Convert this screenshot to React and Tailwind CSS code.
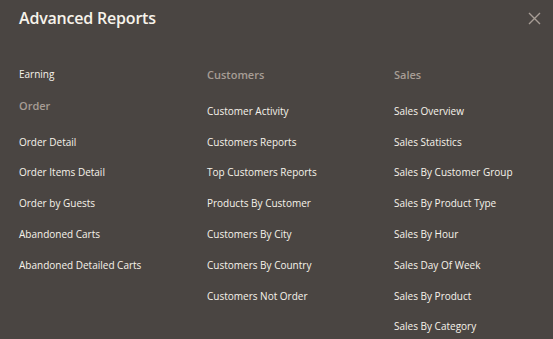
import React from "react";

const Item = ({ children }) => (
  <div className="h-[30.8px] flex items-center text-[10px] text-[#f7f3eb] whitespace-nowrap">{children}</div>
);
const Head = ({ children }) => (
  <div className="h-[31px] mb-[6px] pt-[1px] flex items-center text-[11px] font-semibold text-[#a79d95]">{children}</div>
);

export default function App() {
  return (
    <div className="w-[553px] h-[339px] bg-[#4a4542] overflow-hidden" style={{ fontFamily: '"Open Sans", sans-serif' }}>
      <div className="flex items-start justify-between pl-[19px] pr-[12px] pt-[4px]">
        <h1 className="text-[16px] font-semibold text-[#f7f3eb] leading-[28px] tracking-[-0.2px]">Advanced Reports</h1>
        <svg width="13" height="13" viewBox="0 0 13 13" className="mt-[8px]">
          <path d="M1 1L12 12M12 1L1 12" stroke="#a79d95" strokeWidth="1.4" />
        </svg>
      </div>
      <div className="grid grid-cols-[188px_187px_1fr] pl-[19px] pt-[27px]">
        <div>
          <Item>Earning</Item>
          <Head>Order</Head>
          <Item>Order Detail</Item>
          <Item>Order Items Detail</Item>
          <Item>Order by Guests</Item>
          <Item>Abandoned Carts</Item>
          <Item>Abandoned Detailed Carts</Item>
        </div>
        <div>
          <Head>Customers</Head>
          <Item>Customer Activity</Item>
          <Item>Customers Reports</Item>
          <Item>Top Customers Reports</Item>
          <Item>Products By Customer</Item>
          <Item>Customers By City</Item>
          <Item>Customers By Country</Item>
          <Item>Customers Not Order</Item>
        </div>
        <div>
          <Head>Sales</Head>
          <Item>Sales Overview</Item>
          <Item>Sales Statistics</Item>
          <Item>Sales By Customer Group</Item>
          <Item>Sales By Product Type</Item>
          <Item>Sales By Hour</Item>
          <Item>Sales Day Of Week</Item>
          <Item>Sales By Product</Item>
          <Item>Sales By Category</Item>
        </div>
      </div>
    </div>
  );
}
